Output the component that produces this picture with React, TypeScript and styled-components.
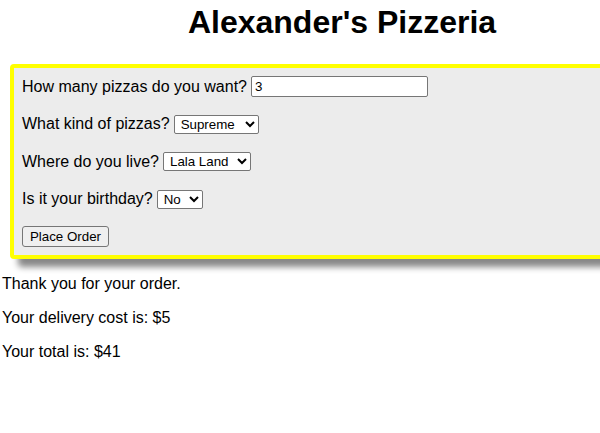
import React from "react";
import styled, { createGlobalStyle } from "styled-components";

const Global = createGlobalStyle`
  html, body { margin: 0; padding: 0; overflow: hidden; background: #fff; }
  body { font-family: "Liberation Sans", Arial, sans-serif; font-size: 16px; color: #000; }
`;

const Page = styled.div`
  width: 680px;
  padding: 4px 0 0 2px;
`;

const Title = styled.h1`
  margin: 0 0 23px 0;
  font-size: 32px;
  font-weight: bold;
  text-align: center;
`;

const OrderBox = styled.form`
  margin: 0 0 0 8px;
  width: 660px;
  box-sizing: border-box;
  background: #ececec;
  border: 4px solid #ffff00;
  border-radius: 4px;
  box-shadow: 8px 8px 6px #888;
  padding: 8px 8px 8px 8px;
  display: flex;
  flex-direction: column;
  gap: 16px;
`;

const Row = styled.div`
  display: flex;
  align-items: center;
  gap: 4px;
  height: 21.5px;
`;

const TextInput = styled.input`
  box-sizing: border-box;
  width: 177px;
  height: 21px;
  border: 1px solid #767676;
  border-radius: 2px;
  padding: 1px 3px;
  font-family: "Liberation Sans", Arial, sans-serif;
  font-size: 13.33px;
  background: #fff;
`;

const Select = styled.select<{ $w: number }>`
  box-sizing: border-box;
  width: ${(p) => p.$w}px;
  height: 19px;
  border: 1px solid #767676;
  border-radius: 2px;
  padding: 0 0 0 2px;
  font-family: "Liberation Sans", Arial, sans-serif;
  font-size: 13.33px;
  background: #fff;
  color: #000;
`;

const Button = styled.button`
  align-self: flex-start;
  box-sizing: border-box;
  width: 87px;
  height: 21px;
  border: 1px solid #767676;
  border-radius: 3px;
  background: #efefef;
  padding: 1px 6px;
  font-family: "Liberation Sans", Arial, sans-serif;
  font-size: 13.33px;
  color: #000;
`;

const Message = styled.p`
  margin: 16px 0;
  line-height: 18px;
`;

export default function App() {
  return (
    <>
      <Global />
      <Page>
        <Title>Alexander's Pizzeria</Title>
        <OrderBox onSubmit={(e) => e.preventDefault()}>
          <Row>
            How many pizzas do you want? <TextInput type="text" defaultValue="3" />
          </Row>
          <Row>
            What kind of pizzas?{" "}
            <Select $w={85} defaultValue="Supreme">
              <option>Cheese</option>
              <option>Pepperoni</option>
              <option>Supreme</option>
            </Select>
          </Row>
          <Row>
            Where do you live?{" "}
            <Select $w={88} defaultValue="Lala Land">
              <option>Lala Land</option>
              <option>Downtown</option>
            </Select>
          </Row>
          <Row>
            Is it your birthday?{" "}
            <Select $w={46} defaultValue="No">
              <option>No</option>
              <option>Yes</option>
            </Select>
          </Row>
          <Button type="submit">Place Order</Button>
        </OrderBox>
        <Message>Thank you for your order.</Message>
        <Message>Your delivery cost is: $5</Message>
        <Message>Your total is: $41</Message>
      </Page>
    </>
  );
}
